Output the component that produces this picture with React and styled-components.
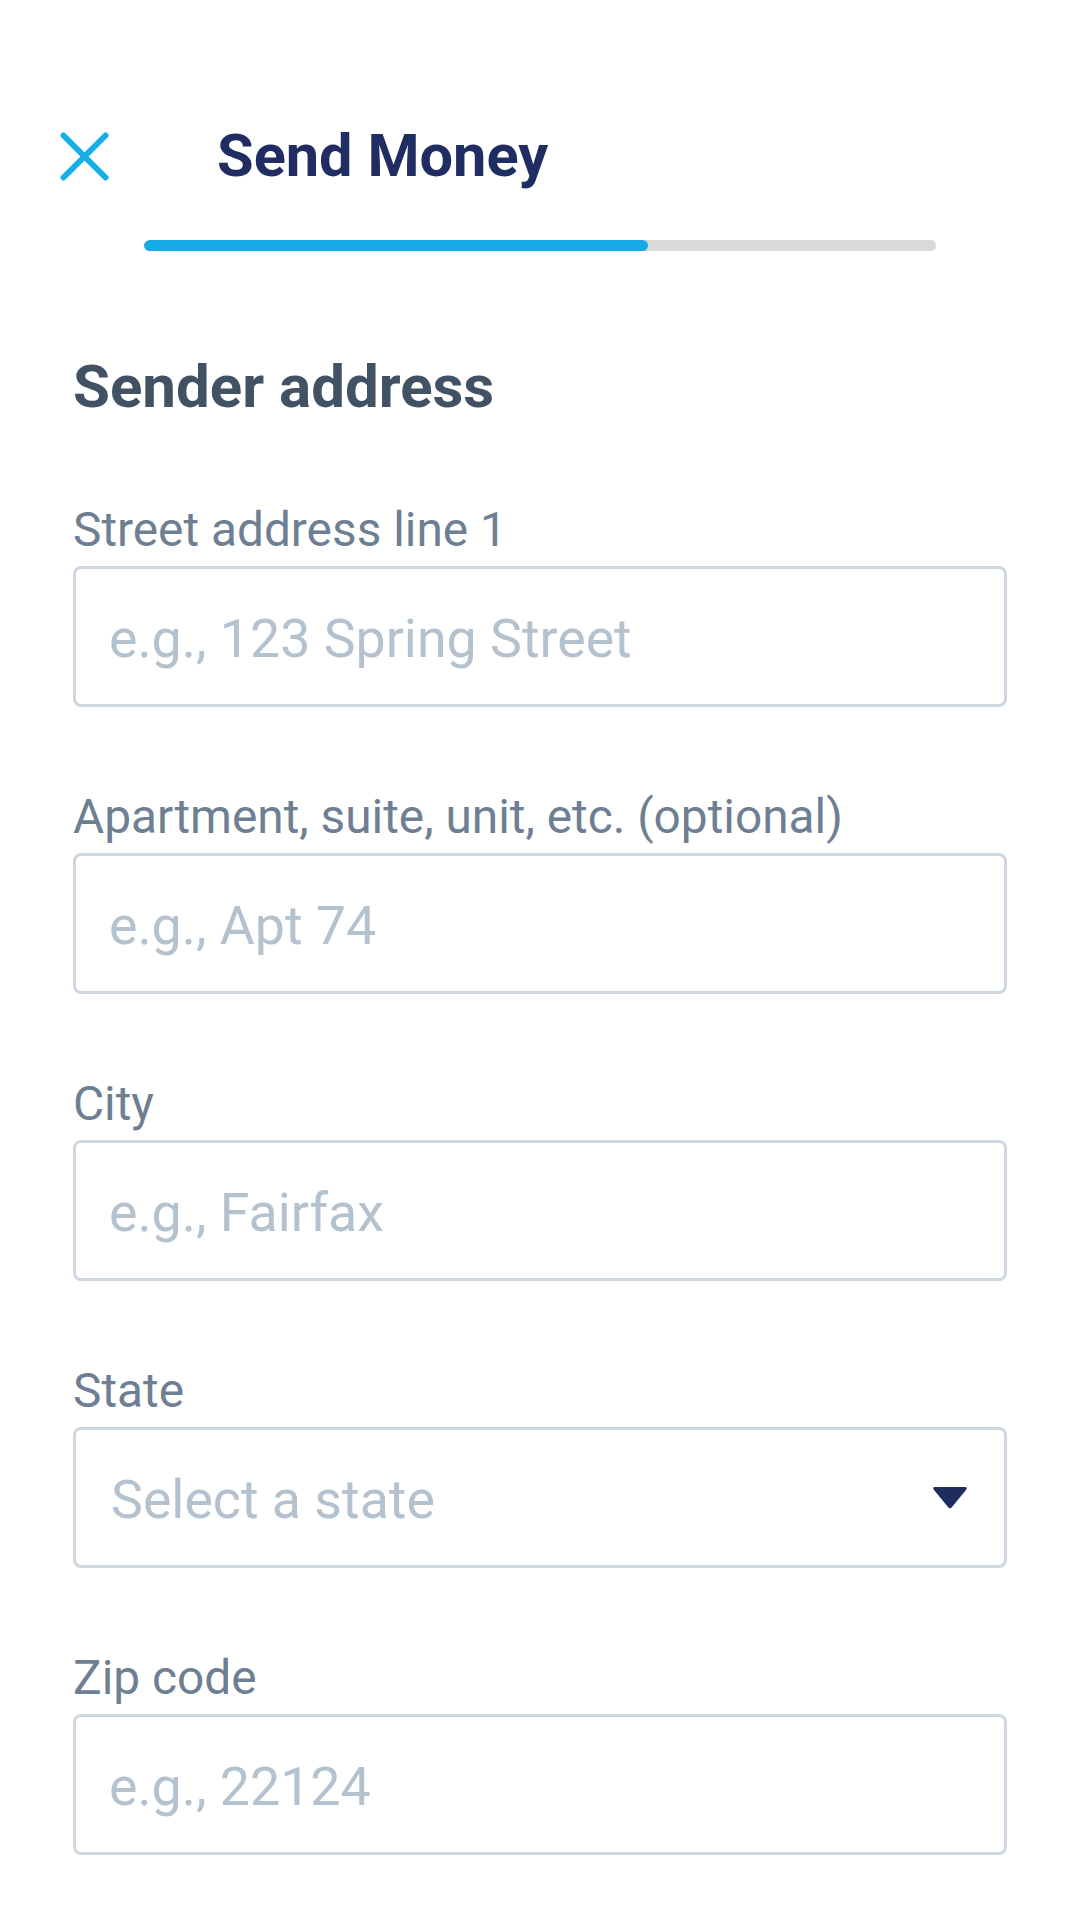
import React from "react";
import styled, { createGlobalStyle } from "styled-components";

const Global = createGlobalStyle`
  html, body { margin: 0; padding: 0; background: #ffffff; }
  body { font-family: Roboto, "Noto Sans", "Liberation Sans", sans-serif; }
  * { box-sizing: border-box; }
`;

const Page = styled.div`
  width: 1080px;
  min-height: 1920px;
  background: #ffffff;
  display: flex;
  flex-direction: column;
`;

const Header = styled.header`
  display: flex;
  align-items: center;
  height: 64px;
  margin-top: 124px;
  padding-left: 60px;
`;

const CloseButton = styled.button`
  width: 49px;
  height: 49px;
  padding: 0;
  border: none;
  background: transparent;
  display: flex;
  align-items: center;
  justify-content: center;
  cursor: pointer;
`;

const Title = styled.h1`
  margin: 0 0 0 108px;
  font-size: 59.5px;
  font-weight: 700;
  color: #1f2d62;
  line-height: 64px;
  letter-spacing: 0;
`;

const Track = styled.div`
  width: 792px;
  height: 11px;
  margin: 52px auto 0;
  border-radius: 6px;
  background: #d9d9d9;
  overflow: hidden;
`;

const Fill = styled.div`
  height: 100%;
  border-radius: 6px;
  background: #14abe6;
`;

const Form = styled.form`
  display: flex;
  flex-direction: column;
  padding: 0 73px;
  margin-top: 101px;
`;

const Heading = styled.h2`
  margin: 0 0 81px;
  font-size: 60px;
  font-weight: 700;
  line-height: 69px;
  color: #415265;
`;

const Field = styled.div`
  display: flex;
  flex-direction: column;
  margin-bottom: 82px;
`;

const Label = styled.label`
  font-size: 47.8px;
  line-height: 56px;
  color: #6e7f93;
  margin-bottom: 8px;
`;

const Input = styled.input`
  width: 100%;
  height: 141px;
  border: 3px solid #cfd7e0;
  border-radius: 8px;
  padding: 4px 0 0 33px;
  font-family: inherit;
  font-size: 53.7px;
  color: #415265;
  background: #ffffff;
  outline: none;
  &::placeholder {
    color: #b4c1cf;
    opacity: 1;
  }
`;

const Select = styled.div`
  width: 100%;
  height: 141px;
  border: 3px solid #cfd7e0;
  border-radius: 8px;
  padding: 4px 35px 0 35px;
  display: flex;
  align-items: center;
  justify-content: space-between;
  font-size: 53.7px;
  color: #b4c1cf;
  background: #ffffff;
`;

const Caret = () => (
  <svg width="38" height="26" viewBox="0 0 38 26" style={{ marginTop: "-4px" }}>
    <path
      d="M4 2 H34 Q37 2 35 5 L21 22 Q19 24.5 17 22 L3 5 Q1 2 4 2 Z"
      fill="#1f2d5e"
    />
  </svg>
);

const CloseIcon = () => (
  <svg width="49" height="49" viewBox="0 0 49 49">
    <path
      d="M3.5 3.5 L45.5 45.5 M45.5 3.5 L3.5 45.5"
      stroke="#17aee6"
      strokeWidth="6"
      strokeLinecap="round"
    />
  </svg>
);

const fields = [
  { label: "Street address line 1", placeholder: "e.g., 123 Spring Street" },
  { label: "Apartment, suite, unit, etc. (optional)", placeholder: "e.g., Apt 74" },
  { label: "City", placeholder: "e.g., Fairfax" },
  { label: "State", select: true, placeholder: "Select a state" },
  { label: "Zip code", placeholder: "e.g., 22124" },
];

export default function App() {
  const progress = 0.636;
  return (
    <Page>
      <Global />
      <Header>
        <CloseButton aria-label="Close">
          <CloseIcon />
        </CloseButton>
        <Title>Send Money</Title>
      </Header>
      <Track>
        <Fill style={{ width: `${progress * 100}%` }} />
      </Track>
      <Form onSubmit={(e) => e.preventDefault()}>
        <Heading>Sender address</Heading>
        {fields.map((f) => (
          <Field key={f.label}>
            <Label>{f.label}</Label>
            {f.select ? (
              <Select role="combobox">
                <span>{f.placeholder}</span>
                <Caret />
              </Select>
            ) : (
              <Input placeholder={f.placeholder} />
            )}
          </Field>
        ))}
      </Form>
    </Page>
  );
}
